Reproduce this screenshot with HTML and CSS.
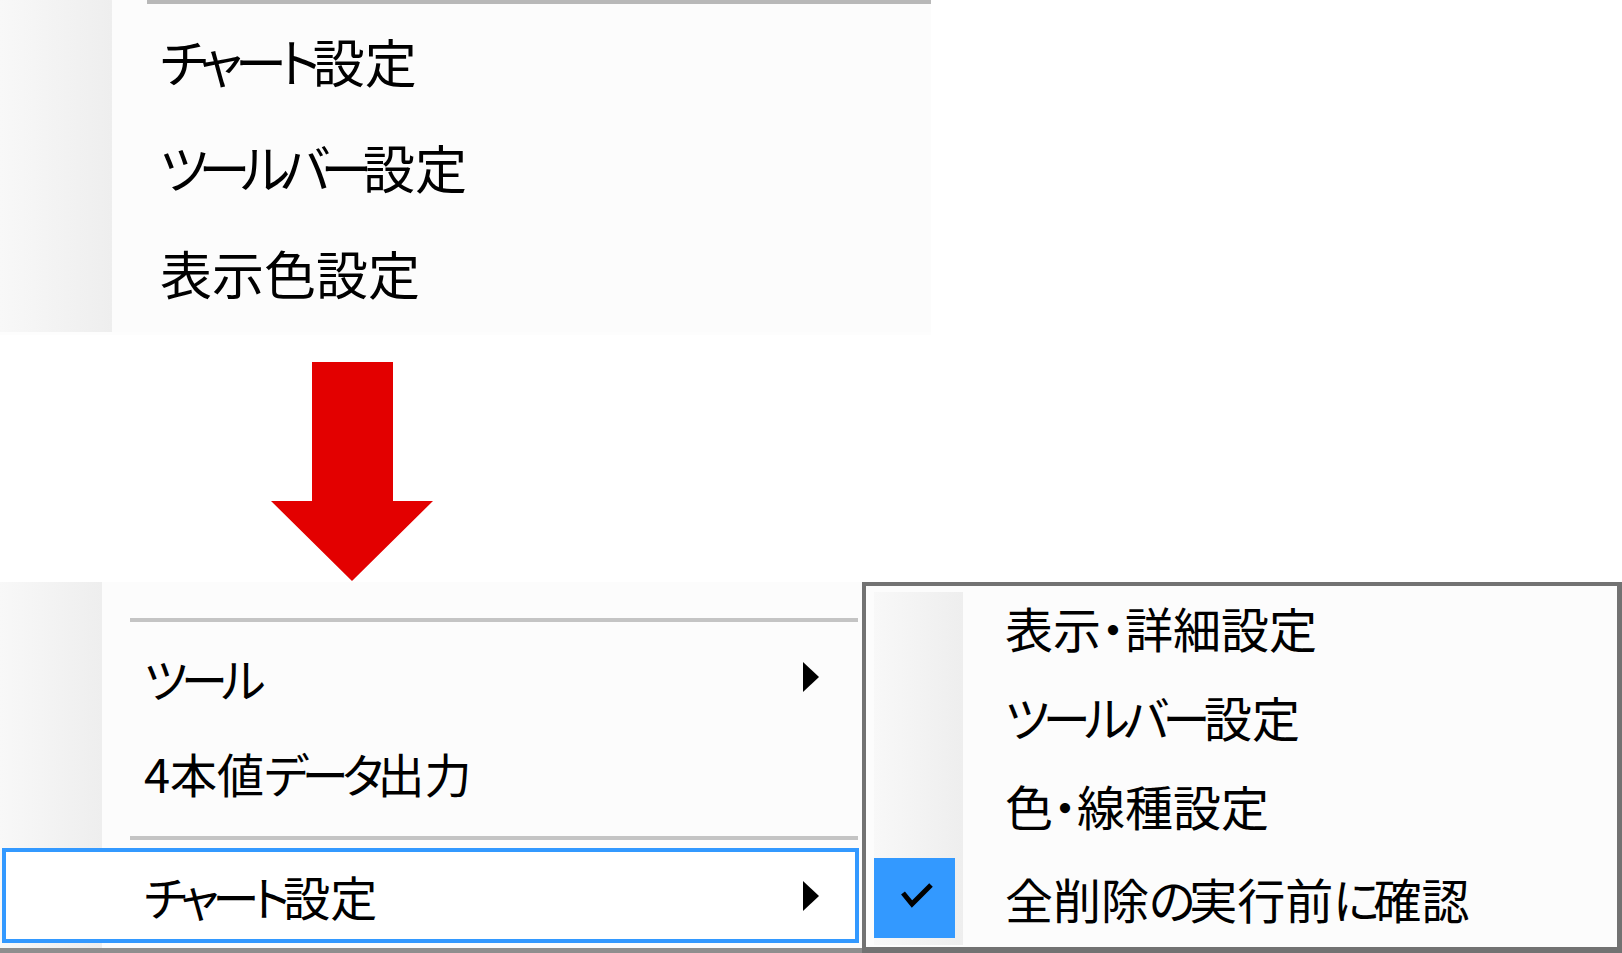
FILE: index.html
```html
<!doctype html>
<html lang="ja">
<head>
    <meta charset="utf-8">
    <title>チャート設定メニュー</title>
    <link rel="stylesheet" href="styles.css">
</head>
<body>
    <div class="panel-old">
        <div class="sep sep-old"></div>
        <div class="item"><span class="k k-loose">チャート</span>設定</div>
        <div class="item"><span class="k">ツールバー</span>設定</div>
        <div class="item">表示色設定</div>
    </div>

    <div class="arrow-wrap">
        <svg width="162" height="219" viewBox="0 0 162 219">
            <polygon points="41,0 122,0 122,139 162,139 81,219 0,139 41,139" fill="#e30000"/>
        </svg>
    </div>

    <div class="menus">
        <div class="menu">
            <div class="sep sep-first"></div>
            <div class="item">
                <span class="k">ツール</span>
                <svg class="caret" width="16" height="30" viewBox="0 0 16 30"><polygon points="0,0 16,15 0,30" fill="#000"/></svg>
            </div>
            <div class="item">4本値<span class="k">データ</span>出力</div>
            <div class="sep sep-second"></div>
            <div class="item selected">
                <span><span class="k">チャート</span>設定</span>
                <svg class="caret" width="16" height="30" viewBox="0 0 16 30"><polygon points="0,0 16,15 0,30" fill="#000"/></svg>
            </div>
        </div>

        <div class="submenu">
            <div class="sub-item"><span class="mark"></span>表示・詳細設定</div>
            <div class="sub-item"><span class="mark"></span><span class="k">ツールバー</span>設定</div>
            <div class="sub-item"><span class="mark"></span>色・線種設定</div>
            <div class="sub-item">
                <span class="mark checked">
                    <svg width="81" height="80" viewBox="0 0 81 80"><polyline points="29,35 38,46 57,27" fill="none" stroke="#000" stroke-width="5"/></svg>
                </span>全削除<span class="k">の</span>実行前<span class="k">に</span>確認
            </div>
        </div>
    </div>
</body>
</html>
```

FILE: styles.css
```css
html {
    background: #fff;
}

body {
    margin: 0;
    font-family: "Noto Sans CJK JP", "Liberation Sans", sans-serif;
    font-feature-settings: "palt";
    color: #000;
}

/* kana in the menu font are narrower than in Noto */
.k {
    letter-spacing: -6px;
}

/* old menu (before) */
.panel-old {
    width: 931px;
    height: 335px;
    background: linear-gradient(to right, #f8f8f8 0, #eeeeee 112px, #fcfcfc 112px) no-repeat 0 0 / 931px 332px, #fdfdfd;
    font-size: 52px;
}

.panel-old .k {
    letter-spacing: -9px;
}

.panel-old .k-loose {
    letter-spacing: -7px;
}

.panel-old .item {
    height: 106px;
    box-sizing: border-box;
    display: flex;
    align-items: center;
    padding: 0 0 6px 160px;
    line-height: 1;
}

.sep {
    height: 4px;
    background: #bdbdbd;
}

.sep-old {
    margin: 0 0 7px 147px;
    background: #b8b8b8;
}

/* arrow */
.arrow-wrap {
    padding: 27px 0 0 271px;
    height: 220px;
}

.arrow-wrap svg {
    display: block;
}

/* new menu (after) */
.menus {
    display: flex;
    height: 371px;
}

.menu {
    width: 862px;
    box-sizing: border-box;
    padding-bottom: 5px;
    border-bottom: 5px solid #8e8e8e;
    background: linear-gradient(to right, #f8f8f8 0, #eeeeee 102px, #fcfcfc 102px);
    font-size: 47px;
}

.menu .sep {
    margin-left: 130px;
    margin-right: 4px;
    background: #c4c4c4;
}

.sep-first {
    margin-top: 36px;
    margin-bottom: 11px;
}

.sep-second {
    margin-top: 13px;
    margin-bottom: 8px;
}

.menu .item {
    height: 95px;
    box-sizing: border-box;
    display: flex;
    align-items: center;
    padding: 0 43px 7px 144px;
    line-height: 1;
}

.menu .item .caret {
    margin-left: auto;
}

.menu .item.selected {
    margin: 0 3px 0 2px;
    padding: 0 36px 0 138px;
    border: 4px solid #3399ff;
    background: #fff;
}

.submenu {
    flex: 1;
    box-sizing: border-box;
    border: 4px solid #727272;
    border-right-width: 5px;
    border-bottom-width: 6px;
    background: linear-gradient(to right, #f8f8f8 0, #eeeeee 100%) no-repeat 8px 6px / 89px calc(100% - 8px), #fcfcfc;
    font-size: 48px;
}

.sub-item {
    height: 89px;
    box-sizing: border-box;
    display: flex;
    align-items: center;
    padding-left: 8px;
    line-height: 1;
}

.submenu .sub-item:not(:last-child) {
    padding-bottom: 7px;
}

.mark {
    width: 81px;
    height: 80px;
    margin-right: 50px;
    flex-shrink: 0;
}

.mark.checked {
    background: #3399ff;
}

.mark svg {
    display: block;
}
```
